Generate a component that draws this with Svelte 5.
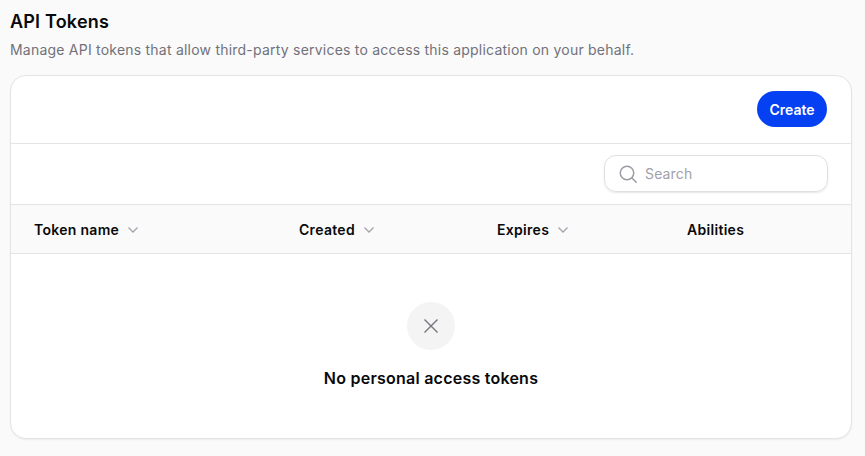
<script>
  const columns = [
    { label: "Token name", sortable: true },
    { label: "Created", sortable: true },
    { label: "Expires", sortable: true },
    { label: "Abilities", sortable: false }
  ];
</script>

<main class="page">
  <h1>API Tokens</h1>
  <p class="subtitle">Manage API tokens that allow third-party services to access this application on your behalf.</p>

  <section class="card">
    <div class="actions">
      <button class="create">Create</button>
    </div>

    <div class="filters">
      <label class="search">
        <svg viewBox="0 0 20 20" width="20" height="20" fill="none" stroke="#9b9ba3" stroke-width="1.5" stroke-linecap="round">
          <circle cx="9" cy="9" r="6.75" />
          <path d="M14 14l4.2 4.2" />
        </svg>
        <input type="text" placeholder="Search" />
      </label>
    </div>

    <div class="thead">
      {#each columns as col}
        <div class="th">
          <span>{col.label}</span>
          {#if col.sortable}
            <svg class="chevron" viewBox="0 0 12 8" width="12" height="8" fill="none" stroke="#a3a3ab" stroke-width="1.3">
              <path d="M1.5 1.5L6 6l4.5-4.5" />
            </svg>
          {/if}
        </div>
      {/each}
    </div>

    <div class="empty">
      <div class="circle">
        <svg viewBox="0 0 16 16" width="16" height="16" fill="none" stroke="#74747c" stroke-width="1.4">
          <path d="M1.5 1.5l13 13M14.5 1.5l-13 13" />
        </svg>
      </div>
      <h2>No personal access tokens</h2>
    </div>
  </section>
</main>

<style>
  :global(body) {
    background: #fafafa;
    font-family: Inter, "Open Sans", sans-serif;
  }

  .page {
    padding: 10px 13px 18px 10px;
  }

  h1 {
    margin: 0;
    font-size: 18px;
    line-height: 24px;
    font-weight: 600;
    color: #09090b;
    letter-spacing: 0.2px;
  }

  .subtitle {
    margin: 6px 0 15px;
    font-size: 14px;
    line-height: 20px;
    color: #71717a;
    letter-spacing: 0.22px;
  }

  .card {
    background: #fff;
    border: 1px solid #e4e4e7;
    border-radius: 16px;
    box-shadow: 0 1px 2px rgba(0, 0, 0, 0.06);
    overflow: hidden;
  }

  .actions {
    display: flex;
    justify-content: flex-end;
    padding: 15px 24px 16px;
    border-bottom: 1px solid #e4e4e7;
  }

  .create {
    width: 70px;
    height: 36px;
    border: none;
    border-radius: 18px;
    background: #0540f2;
    color: #fff;
    font: 600 14px Inter, sans-serif;
  }

  .filters {
    display: flex;
    justify-content: flex-end;
    padding: 11px 23px 12px;
    border-bottom: 1px solid #e4e4e7;
  }

  .search {
    display: flex;
    align-items: center;
    gap: 7px;
    box-sizing: border-box;
    width: 224px;
    height: 37px;
    padding: 0 13px;
    border: 1px solid #e0e0e3;
    border-radius: 12px;
    box-shadow: 0 1px 2px rgba(0, 0, 0, 0.1);
  }

  .search input {
    flex: 1;
    min-width: 0;
    border: none;
    outline: none;
    padding: 0;
    background: none;
    font: 14px Inter, sans-serif;
    letter-spacing: 0.15px;
  }

  .search input::placeholder {
    color: #a1a1aa;
    opacity: 1;
  }

  .thead {
    display: grid;
    grid-template-columns: 264px 198px 190px 1fr;
    height: 48px;
    background: #fafafa;
    border-bottom: 1px solid #e4e4e7;
  }

  .th {
    display: flex;
    align-items: center;
    gap: 8px;
    padding-left: 24px;
    font-size: 14px;
    font-weight: 600;
    color: #09090b;
    letter-spacing: 0.3px;
  }

  .th:first-child {
    padding-left: 23px;
  }

  .chevron {
    margin-top: 1px;
  }

  .empty {
    display: flex;
    flex-direction: column;
    align-items: center;
    padding: 48px 0 48px;
  }

  .circle {
    display: flex;
    align-items: center;
    justify-content: center;
    width: 48px;
    height: 48px;
    border-radius: 50%;
    background: #f4f4f5;
  }

  h2 {
    margin: 16px 0 0;
    font-size: 16px;
    line-height: 24px;
    font-weight: 600;
    color: #09090b;
    letter-spacing: 0.24px;
  }
</style>
